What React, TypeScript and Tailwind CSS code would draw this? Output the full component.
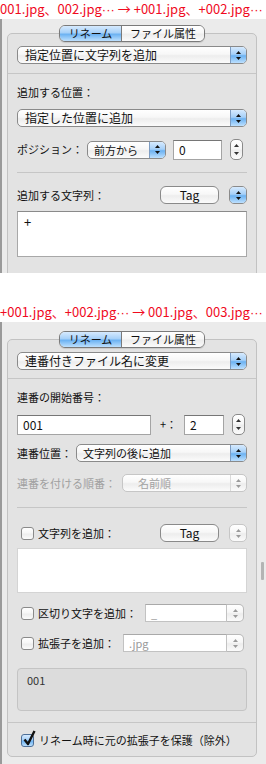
import React from 'react';

const glossWhite = 'bg-[linear-gradient(#ffffff,#f7f7f7_45%,#ededed_55%,#fbfbfb)]';
const aquaBlue = 'bg-[linear-gradient(#d6eafe,#a6d0f8_45%,#6cb2f2_55%,#bde0fe)]';

const Arrows = ({ color = '#111' }: { color?: string }) => (
  <svg width="5" height="9" viewBox="0 0 5 9">
    <path d="M2.5 0L5 3H0Z" fill={color} />
    <path d="M0 6H5L2.5 9Z" fill={color} />
  </svg>
);

type PopupProps = { label?: string; disabled?: boolean; big?: boolean; className?: string };

function Popup({ label, disabled, big, className = '' }: PopupProps) {
  return (
    <div
      className={`flex h-[18px] overflow-hidden rounded-[5px] border ${
        disabled ? 'border-[#c6c6c6] text-[#a2a2a2]' : 'border-[#8a8a8a] text-[#111]'
      } ${glossWhite} ${className}`}
    >
      {label !== undefined && (
        <span className={`flex-1 truncate ${big ? 'pl-[7px] text-[12px]' : 'pl-[6px] text-[11px]'} leading-[16px]`}>
          {label}
        </span>
      )}
      <span
        className={`flex items-center justify-center ${label !== undefined ? 'w-[16px] border-l' : 'flex-1'} ${
          disabled ? 'border-[#dadada]' : `border-[#7d9cc2] ${aquaBlue}`
        }`}
      >
        <Arrows color={disabled ? '#9a9a9a' : '#111'} />
      </span>
    </div>
  );
}

function Field({ value, className = '' }: { value: string; className?: string }) {
  return (
    <div
      className={`h-[20px] border border-[#a4a4a4] border-t-[#767676] bg-white pl-[5px] text-[12px] leading-[18px] text-[#111] ${className}`}
    >
      {value}
    </div>
  );
}

function Stepper({ className = '' }: { className?: string }) {
  return (
    <div
      className={`flex h-[21px] w-[13px] shrink-0 flex-col items-center justify-between rounded-[5px] border border-[#8a8a8a] py-[4px] ${glossWhite} ${className}`}
    >
      <svg width="5" height="3" viewBox="0 0 5 3">
        <path d="M2.5 0L5 3H0Z" fill="#333" />
      </svg>
      <svg width="5" height="3" viewBox="0 0 5 3">
        <path d="M0 0H5L2.5 3Z" fill="#333" />
      </svg>
    </div>
  );
}

function Check({ checked }: { checked?: boolean }) {
  return (
    <span
      className={`relative ml-[4px] inline-block h-[13px] w-[13px] shrink-0 rounded-[3px] border ${
        checked ? `border-[#4d6f98] ${aquaBlue}` : `border-[#8a8a8a] ${glossWhite}`
      }`}
    >
      {checked && (
        <svg className="absolute -top-[5px] left-[1px]" width="13" height="16" viewBox="0 0 13 16">
          <path d="M1.5 9.5L5 14L11.5 1" stroke="#111" strokeWidth="2.4" fill="none" strokeLinejoin="round" />
        </svg>
      )}
    </span>
  );
}

function TagButton() {
  return (
    <div
      className={`flex h-[18px] w-[59px] shrink-0 items-center justify-center rounded-[6px] border border-[#8a8a8a] text-[12px] text-[#111] ${glossWhite}`}
    >
      Tag
    </div>
  );
}

function Combo({ value, className = '' }: { value: string; className?: string }) {
  return (
    <div className={`flex h-[18px] ${className}`}>
      <div className="flex-1 border border-[#c2c2c2] border-t-[#a9a9a9] bg-white pl-[5px] text-[11px] leading-[16px] text-[#9a9a9a]">
        {value}
      </div>
      <div
        className={`flex w-[17px] items-center justify-center rounded-r-[5px] border border-l-0 border-[#b9b9b9] ${glossWhite}`}
      >
        <Arrows color="#9a9a9a" />
      </div>
    </div>
  );
}

function Tabs() {
  return (
    <div className="relative z-10 flex justify-center">
      <div className="flex h-[17px] overflow-hidden rounded-[6px] border border-[#7a7a7a] text-[11px] leading-[15px] text-[#111] shadow-[0_1px_1px_rgba(0,0,0,0.12)]">
        <span className={`w-[61px] text-center ${aquaBlue}`}>リネーム</span>
        <span className={`w-[83px] border-l border-[#7a7a7a] text-center ${glossWhite}`}>ファイル属性</span>
      </div>
    </div>
  );
}

const Dots = () => <span className="font-['Liberation_Sans',sans-serif]">···</span>;

const Caption = ({ parts }: { parts: [string, string, string] }) => (
  <div className="h-[19px] whitespace-nowrap pt-[1px] text-[13px] leading-[15px] text-[#f00a1e]">
    {parts[0]}
    <Dots />
    {parts[1]}
    {parts[2]}
    <Dots />
  </div>
);

const FullSep = ({ className = '' }: { className?: string }) => (
  <div className={`-mx-[9px] h-px bg-[#c6c6c6] ${className}`} />
);
const Sep = ({ className = '' }: { className?: string }) => <div className={`h-px bg-[#c6c6c6] ${className}`} />;

const boxCls = '-mt-[9px] rounded-[5px] border border-[#c2c2c2] bg-[#e3e3e3] px-[9px]';

function InsertWindow() {
  return (
    <div className="flex h-[254px] overflow-hidden border-l-2 border-[#9a9a9a] bg-[#ebebeb]">
      <div className="flex-1 pl-[5px] pt-[6px]">
        <Tabs />
        <div className={`${boxCls} pb-[30px] pt-[12px]`}>
          <Popup big label="指定位置に文字列を追加" />
          <FullSep className="mt-[9px]" />
          <div className="mt-[11px] h-[14px] text-[11px] leading-[14px]">追加する位置：</div>
          <Popup big label="指定した位置に追加" className="mt-[10px]" />
          <div className="mt-[12px] flex h-[21px] items-center">
            <span className="w-[70px] shrink-0 text-[11px]">ポジション：</span>
            <Popup label="前方から" className="w-[79px]" />
            <Field value="0" className="ml-[7px] w-[49px]" />
            <Stepper className="ml-[8px]" />
          </div>
          <Sep className="mt-[12px]" />
          <div className="mt-[13px] flex h-[18px] items-center">
            <span className="flex-1 text-[11px]">追加する文字列：</span>
            <TagButton />
            <Popup className="ml-[10px] w-[18px]" />
          </div>
          <div className="mt-[7px] h-[46px] border border-[#a8a8a8] border-t-[#8a8a8a] bg-white pl-[6px] text-[13px] leading-[20px]">
            +
          </div>
        </div>
      </div>
      <div className="w-[9px]" />
    </div>
  );
}

function SerialWindow() {
  return (
    <div className="flex h-[442px] overflow-hidden border-l-2 border-[#9a9a9a] bg-[#ebebeb]">
      <div className="flex-1 pl-[5px] pt-[9px]">
        <Tabs />
        <div className={`${boxCls} pb-[7px] pt-[12px]`}>
          <Popup big label="連番付きファイル名に変更" />
          <FullSep className="mt-[8px]" />
          <div className="mt-[11px] h-[14px] text-[11px] leading-[14px]">連番の開始番号：</div>
          <div className="mt-[10px] flex h-[21px] items-center">
            <Field value="001" className="w-[134px]" />
            <span className="ml-[9px] w-[24px] text-[11px]">+：</span>
            <Field value="2" className="w-[40px]" />
            <Stepper className="ml-[8px]" />
          </div>
          <div className="mt-[9px] flex h-[18px] items-center">
            <span className="w-[59px] shrink-0 text-[11px]">連番位置：</span>
            <Popup label="文字列の後に追加" className="flex-1" />
          </div>
          <div className="mt-[12px] flex h-[18px] items-center">
            <span className="w-[105px] shrink-0 text-[11px] text-[#a0a0a0]">連番を付ける順番：</span>
            <Popup disabled label="名前順" className="flex-1 [&>span:first-child]:pl-[15px]" />
          </div>
          <Sep className="mt-[15px]" />
          <div className="mt-[16px] flex h-[18px] items-center">
            <Check />
            <span className="ml-[4px] flex-1 text-[11px]">文字列を追加：</span>
            <TagButton />
            <Popup disabled className="ml-[10px] w-[18px]" />
          </div>
          <div className="mt-[6px] h-[45px] border border-[#d4d4d4] bg-white" />
          <div className="mt-[11px] flex h-[18px] items-center">
            <Check />
            <span className="ml-[4px] w-[107px] shrink-0 text-[11px]">区切り文字を追加：</span>
            <Combo value="_" className="mr-[3px] flex-1" />
          </div>
          <div className="mt-[12px] flex h-[18px] items-center">
            <Check />
            <span className="ml-[4px] w-[85px] shrink-0 text-[11px]">拡張子を追加：</span>
            <Combo value=".jpg" className="mr-[3px] flex-1" />
          </div>
          <div className="mt-[16px] h-[43px] rounded-[4px] border border-[#c4c4c4] bg-[#dcdcdc] pl-[9px] pt-[4px] text-[11px] leading-[14px] text-[#333]">
            001
          </div>
          <FullSep className="mt-[11px]" />
          <div className="mt-[8px] flex h-[18px] items-center">
            <Check checked />
            <span className="ml-[5px] text-[11px]">リネーム時に元の拡張子を保護（除外）</span>
          </div>
        </div>
      </div>
      <div className="w-[9px] pl-[4px] pt-[240px]">
        <div className="h-[18px] w-[3px] rounded-[1px] bg-[#b4b4b4]" />
      </div>
    </div>
  );
}

export default function App() {
  return (
    <div className="h-[764px] w-[266px] overflow-hidden bg-white font-['Noto_Sans_CJK_JP','Noto_Sans',sans-serif] text-[#111]">
      <Caption parts={['001.jpg、002.jpg', ' → ', '+001.jpg、+002.jpg']} />
      <InsertWindow />
      <div className="h-[30px]" />
      <Caption parts={['+001.jpg、+002.jpg', ' → ', '001.jpg、003.jpg']} />
      <SerialWindow />
    </div>
  );
}
